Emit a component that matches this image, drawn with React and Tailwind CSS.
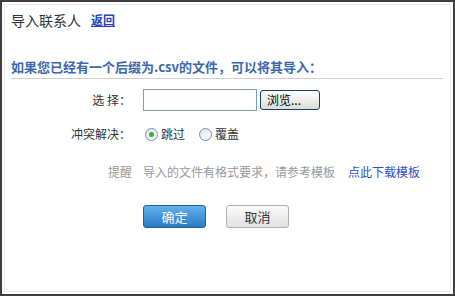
import React from "react";

function Radio({ checked }) {
  return (
    <span className="relative inline-flex items-center justify-center w-[13px] h-[13px] rounded-full border border-[#6f8fae] bg-gradient-to-br from-[#dfe3e8] to-[#ffffff]">
      {checked && <span className="w-[5px] h-[5px] rounded-full bg-[#2fb52f]" />}
    </span>
  );
}

export default function App() {
  const font = { fontFamily: '"Noto Sans CJK SC", "Noto Sans", sans-serif' };
  return (
    <div className="w-[455px] h-[296px] border-2 border-[#3f3f3f] bg-white p-[2px]" style={font}>
      <div className="h-full border border-[#ededed] pt-[5px]">
        <div className="flex items-center h-[20px] pl-[6px] gap-[10px]">
          <span className="text-[14px] text-[#333] leading-[20px]">导入联系人</span>
          <a className="text-[12px] text-[#2443b8] underline font-bold leading-[20px]">返回</a>
        </div>
        <div className="ml-[6px] mr-[7px] mt-[28px] border-b border-[#cfcfcf] pb-[2px]">
          <div className="text-[13px] leading-[18px] font-bold text-[#3c67b0]">
            如果您已经有一个后缀为.csv的文件，可以将其导入：
          </div>
        </div>
        <div className="grid grid-cols-[130px_1fr] gap-x-[8px] mt-[10px]">
          <div className="flex items-center justify-end h-[22px] pr-[4px] text-[12px] text-[#333]">选&nbsp;择：</div>
          <div className="flex items-center h-[22px] gap-[3px]">
            <div className="w-[114px] h-[22px] border border-[#7f9db9] bg-white" />
            <div className="w-[60px] h-[20px] border border-[#1c3f6e] rounded-[3px] bg-gradient-to-b from-[#ffffff] to-[#dcdcd6] flex items-center pl-[6px] text-[12px] text-black leading-none">
              浏览...
            </div>
          </div>

          <div className="flex items-center justify-end h-[20px] mt-[13px] pr-[4px] text-[12px] text-[#333]">冲突解决：</div>
          <div className="flex items-center h-[20px] mt-[13px] text-[12px] text-[#333]">
            <span className="ml-[2px] flex items-center gap-[3px]">
              <Radio checked />
              <span>跳过</span>
            </span>
            <span className="ml-[14px] flex items-center gap-[3px]">
              <Radio />
              <span>覆盖</span>
            </span>
          </div>

          <div className="flex items-center justify-end h-[20px] mt-[18px] pr-[3px] text-[12px] text-[#999]">提醒</div>
          <div className="flex items-center h-[20px] mt-[18px] text-[12px]">
            <span className="text-[#999]">导入的文件有格式要求，请参考模板</span>
            <a className="ml-[13px] text-[#2c4fc8]">点此下载模板</a>
          </div>

          <div />
          <div className="flex items-center mt-[23px] gap-[20px]">
            <button className="w-[63px] h-[23px] rounded-[3px] border border-[#1f5f9e] bg-gradient-to-b from-[#62b0ea] to-[#2a7bc6] text-white text-[13px] leading-none">
              确定
            </button>
            <button className="w-[63px] h-[23px] rounded-[3px] border border-[#b0b0b0] bg-gradient-to-b from-[#fbfbfb] to-[#e1e1e1] text-[#333] text-[13px] leading-none">
              取消
            </button>
          </div>
        </div>
      </div>
    </div>
  );
}
